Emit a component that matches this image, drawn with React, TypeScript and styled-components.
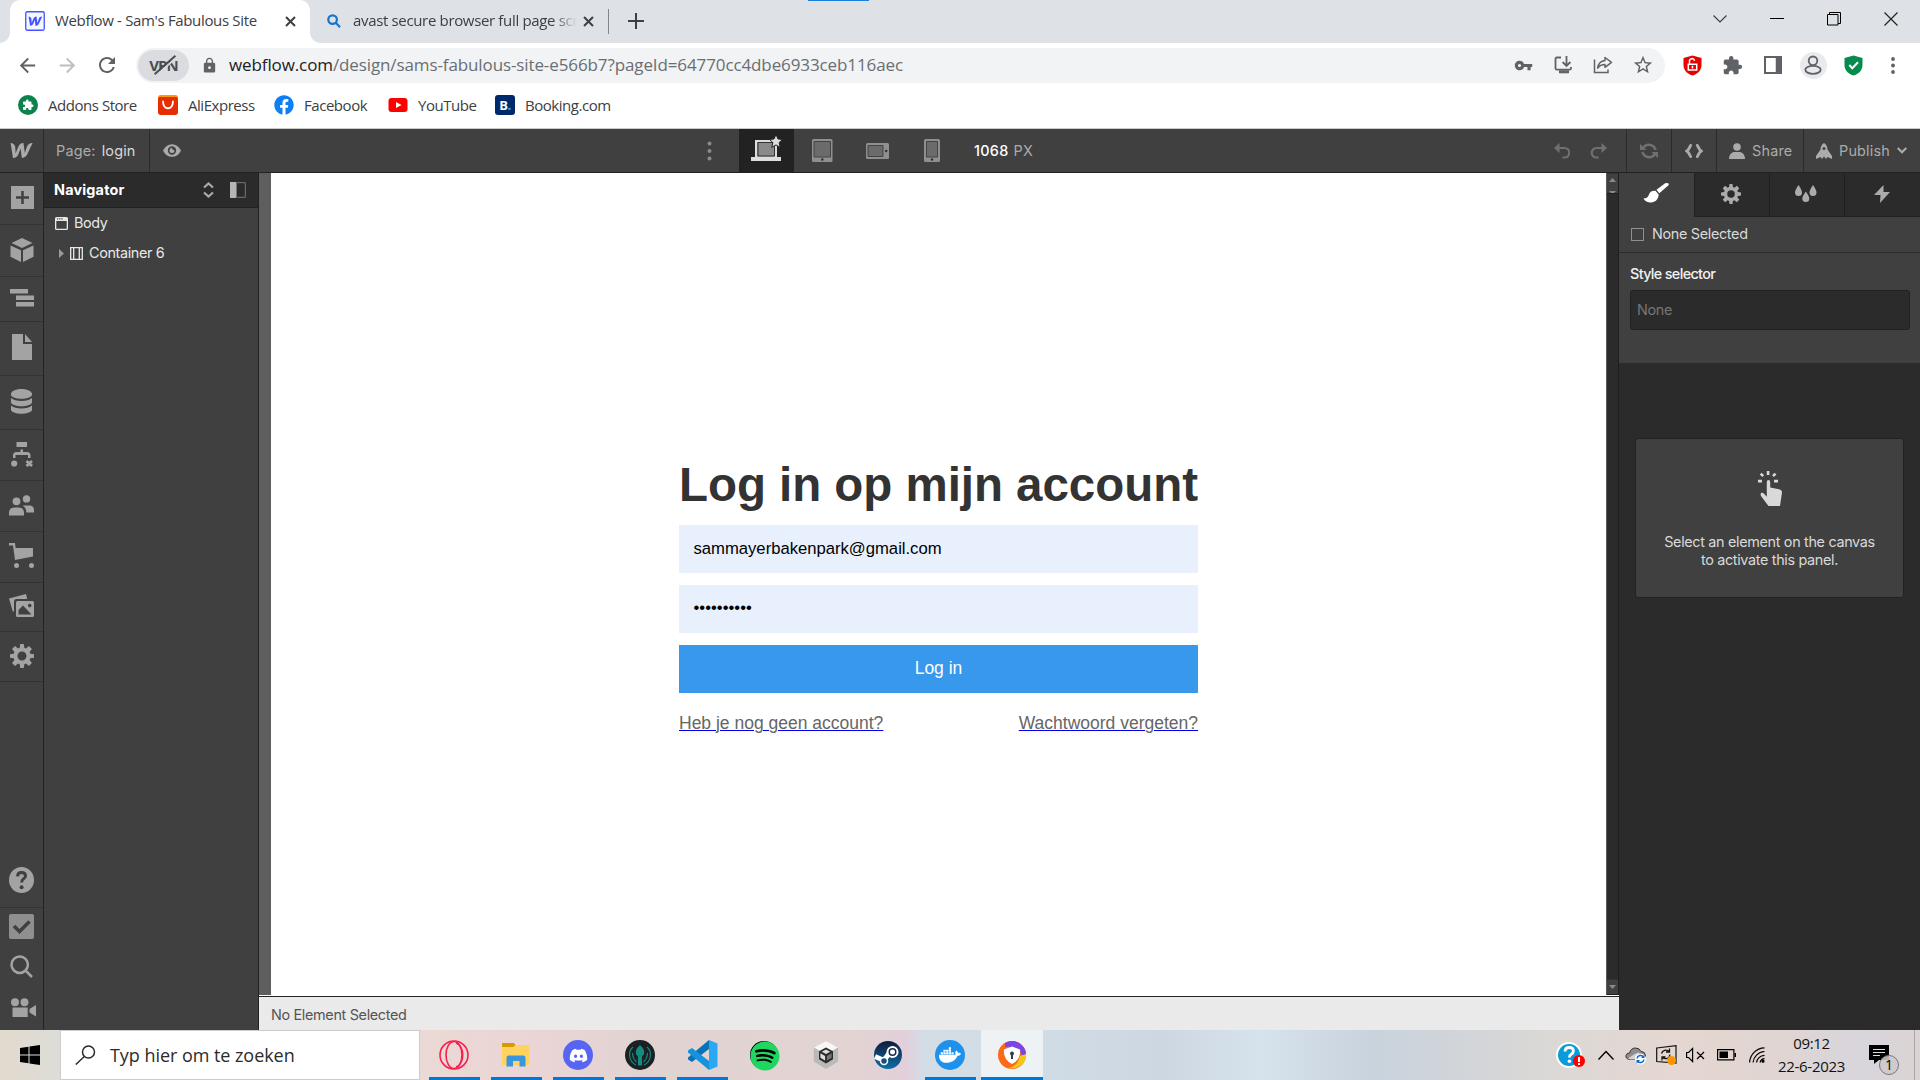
import React from 'react';
import styled, { createGlobalStyle, css } from 'styled-components';
import {
  MdArrowBack, MdArrowForward, MdRefresh, MdLock, MdVpnKey, MdStarBorder, MdExtension,
} from 'react-icons/md';
import { FaDiscord, FaSpotify, FaDocker, FaFacebook } from 'react-icons/fa';

const ui = `'Open Sans', 'Noto Sans', sans-serif`;
const app = `Inter, Roboto, sans-serif`;

const Global = createGlobalStyle`
  *, *::before, *::after { box-sizing: border-box; }
  body { margin: 0; overflow: hidden; }
  svg { display: block; flex: none; }
`;

const Screen = styled.div`
  width: 1920px;
  height: 1080px;
  display: flex;
  flex-direction: column;
  overflow: hidden;
  background: #fff;
`;

/* ---------- browser ---------- */
const TabStrip = styled.header`
  position: relative;
  height: 43px;
  flex: none;
  display: flex;
  background: #dee1e6;
  padding: 0 1px 0 10px;
  color: #3c4043;
  font-family: ${ui};
`;
const LoadMark = styled.i`
  position: absolute;
  left: 808px;
  top: 0;
  width: 61px;
  height: 1px;
  background: #1a7fdb;
`;
const Tab = styled.div<{ $active?: boolean }>`
  position: relative;
  display: flex;
  align-items: center;
  width: ${p => (p.$active ? 300 : 298)}px;
  padding: 0 14px 1px ${p => (p.$active ? 15 : 17)}px;
  ${p => p.$active && css`
    background: #fff;
    border-radius: 10px 10px 0 0;
    &::before, &::after {
      content: '';
      position: absolute;
      bottom: 0;
      width: 10px;
      height: 10px;
    }
    &::before { left: -10px; background: radial-gradient(circle at 0 0, #dee1e6 9.5px, #fff 10px); }
    &::after { right: -10px; background: radial-gradient(circle at 100% 0, #dee1e6 9.5px, #fff 10px); }
  `}
`;
const TabTitle = styled.span<{ $fade?: boolean }>`
  flex: 1;
  margin: 0 5px 2px ${p => (p.$fade ? 12 : 10)}px;
  font-size: 15px;
  line-height: 20px;
  letter-spacing: -0.34px;
  white-space: nowrap;
  ${p => p.$fade && css`mask-image: linear-gradient(90deg, #000 200px, transparent 224px);`}
`;
const Divider = styled.i`
  width: 1px;
  height: 25px;
  margin-top: 9px;
  background: #80868b;
`;
const Spacer = styled.div`flex: 1;`;
const Slot = styled.div<{ $w: number }>`
  width: ${p => p.$w}px;
  flex: none;
  display: flex;
  align-items: center;
  justify-content: center;
`;
const DimSlot = styled(Slot)`color: #bcbec1;`;
const PlusSlot = styled(Slot)`padding: 0 2px 1px 0;`;
const WinSlot = styled(Slot)`height: 37px;`;

const AddressRow = styled.div`
  height: 44px;
  flex: none;
  display: flex;
  align-items: center;
  color: #5f6368;
  padding: 0 0 0 7px;
`;
const AddressBar = styled.div`
  width: 1529px;
  height: 35px;
  margin-left: 9px;
  border-radius: 18px;
  background: #f1f3f4;
  display: flex;
  align-items: center;
  padding: 0 2px;
`;
const Vpn = styled.div`
  width: 51px;
  height: 31px;
  border-radius: 16px;
  background: #dadce0;
  display: grid;
  place-items: center;
`;
const VpnText = styled.span`
  position: relative;
  font: 700 15px/20px ${ui};
  letter-spacing: -1px;
  color: #4a4d51;
  &::after {
    content: '';
    position: absolute;
    left: 2px;
    top: 9px;
    width: 28px;
    height: 2px;
    background: #4a4d51;
    box-shadow: 0 2px 0 #dadce0;
    transform: rotate(-42deg);
  }
`;
const Url = styled.span`
  flex: 1;
  font: 17px/24px ${ui};
  letter-spacing: -0.11px;
  color: #6a6e73;
  white-space: nowrap;
  b { font-weight: 400; color: #202124; }
`;
const Avatar = styled.div`
  width: 27px;
  height: 27px;
  border-radius: 50%;
  background: #e8eaed;
  display: grid;
  place-items: center;
`;
const Bookmarks = styled.nav`
  height: 42px;
  flex: none;
  display: flex;
  align-items: center;
  padding: 0 0 5px 18px;
  border-bottom: 1px solid #c9cbce;
`;
const Bookmark = styled.a<{ $w: number }>`
  width: ${p => p.$w}px;
  flex: none;
  display: flex;
  align-items: center;
  gap: 10px;
  font: 15px/20px ${ui};
  letter-spacing: -0.46px;
  color: #3c4043;
`;
const Booking = styled.span`
  width: 20px;
  height: 20px;
  border-radius: 3px;
  background: #00296b;
  color: #fff;
  font: 700 13px/20px 'Open Sans', sans-serif;
  text-align: center;
  b { color: #2f9bea; }
`;

/* ---------- designer ---------- */
const TopBar = styled.div`
  height: 44px;
  flex: none;
  display: flex;
  background: #404040;
  border-bottom: 1px solid #222;
  color: #ababab;
  font: 14.4px/43px ${app};
  letter-spacing: 0.2px;
`;
const BarCell = styled.div<{ $w: number; $line?: boolean; $on?: boolean }>`
  width: ${p => p.$w}px;
  flex: none;
  display: flex;
  align-items: center;
  justify-content: center;
  background: ${p => (p.$on ? '#222' : 'transparent')};
  border-right: ${p => (p.$line ? '1px solid #2b2b2b' : 'none')};
  white-space: nowrap;
`;
const TextCell = styled(BarCell)<{ $gap: number }>`
  justify-content: flex-start;
  padding-left: 12px;
  gap: ${p => p.$gap}px;
`;
const PageName = styled.span`color: #d9d9d9;`;
const SizeValue = styled.span`
  font-weight: 500;
  color: #fff;
  letter-spacing: 0.3px;
`;
const RedoCell = styled(BarCell)`
  justify-content: flex-start;
  padding-left: 10px;
`;
const LaptopCell = styled(BarCell)`padding-bottom: 5px;`;
const Work = styled.div`
  height: 857px;
  flex: none;
  display: flex;
`;
const Rail = styled.aside`
  width: 44px;
  display: flex;
  flex-direction: column;
  background: #404040;
  border-right: 1px solid #222;
  color: #a3a3a3;
`;
const RailCell = styled.div<{ $h: number; $line?: boolean; $left?: number; $lift?: number }>`
  height: ${p => p.$h}px;
  flex: none;
  display: flex;
  align-items: center;
  justify-content: center;
  padding: 0 0 ${p => p.$lift ?? 2}px ${p => p.$left ?? 0}px;
  border-bottom: ${p => (p.$line ? '1px solid #333' : 'none')};
`;
const Navigator = styled.aside`
  width: 215px;
  background: #404040;
  border-right: 1px solid #222;
  color: #e8e8e8;
  font: 14.4px/30px ${app};
  letter-spacing: -0.36px;
`;
const NavHead = styled.div`
  height: 35px;
  display: flex;
  align-items: center;
  padding: 0 5px 0 10px;
  background: #2b2b2b;
  border-bottom: 1px solid #222;
  b { flex: 1; font-weight: 700; letter-spacing: 0.18px; color: #fff; }
`;
const NavRow = styled.div<{ $pad: number; $gap: number }>`
  height: 30px;
  display: flex;
  align-items: center;
  gap: ${p => p.$gap}px;
  padding-left: ${p => p.$pad}px;
  svg + svg { margin-right: 2px; }
`;
const Center = styled.main`
  width: 1360px;
  display: flex;
  flex-direction: column;
`;
const Stage = styled.div`
  height: 822px;
  flex: none;
  display: flex;
  background: #5e5e5e;
  padding-left: 12px;
`;
const Canvas = styled.section`
  width: 1335px;
  background: #fff;
  display: flex;
  justify-content: center;
  padding-top: 284px;
`;
const Scroll = styled.div`
  width: 13px;
  display: flex;
  flex-direction: column;
  justify-content: space-between;
  background: #2b2b2b;
  border-left: 1px solid #5a5a5a;
  border-right: 1px solid #1f1f1f;
`;
const ScrollEnd = styled.div<{ $h: number }>`
  height: ${p => p.$h}px;
  background: #404040;
  border-bottom: 1px solid #1f1f1f;
  border-top: 1px solid #333;
  display: flex;
  flex-direction: column;
  justify-content: space-between;
  align-items: center;
  padding: 4px 0 0;
`;
const Footer = styled.footer`
  flex: 1;
  background: #eaeaea;
  border-top: 1px solid #222;
  margin-top: 1px;
  padding-left: 12px;
  color: #555;
  font: 14.4px/35px ${app};
  letter-spacing: -0.33px;
`;
const Login = styled.section`
  width: 519px;
  font-family: 'Liberation Sans', Arial, sans-serif;
`;
const Title = styled.h1`
  margin: 0 0 13px;
  font-size: 47.5px;
  line-height: 55px;
  font-weight: 700;
  letter-spacing: -0.04px;
  color: #333;
  white-space: nowrap;
`;
const Field = styled.div<{ $dots?: boolean }>`
  height: 48px;
  margin-bottom: 12px;
  padding: 0 14.500px;
  background: #e8f0fe;
  color: #000;
  font-size: 16.67px;
  line-height: ${p => (p.$dots ? 45 : 47)}px;
  letter-spacing: ${p => (p.$dots ? '0' : '-0.01px')};
`;
const Button = styled.div`
  height: 48px;
  background: #3898ec;
  color: #fff;
  font-size: 17.5px;
  line-height: 46px;
  text-align: center;
`;
const Links = styled.div`
  display: flex;
  justify-content: space-between;
  margin-top: 18px;
`;
const TextLink = styled.a`
  font-size: 17.5px;
  line-height: 25px;
  color: #666;
  text-decoration: underline #00e;
  text-decoration-thickness: 1px;
`;

const StylePanel = styled.aside`
  width: 301px;
  display: flex;
  flex-direction: column;
  background: #2b2b2b;
  color: #d9d9d9;
  font: 14.4px/18px ${app};
  letter-spacing: -0.33px;
`;
const PanelTabs = styled.div`
  height: 44px;
  display: flex;
`;
const PanelTab = styled.div<{ $w: number; $on?: boolean }>`
  width: ${p => p.$w}px;
  display: grid;
  place-items: center;
  padding-bottom: ${p => (p.$on ? 4 : 2)}px;
  padding-right: 2px;
  color: ${p => (p.$on ? '#fff' : '#ababab')};
  background: ${p => (p.$on ? '#404040' : '#2b2b2b')};
  border-left: ${p => (p.$on ? 'none' : '1px solid #1f1f1f')};
  border-bottom: ${p => (p.$on ? 'none' : '1px solid #222')};
`;
const Selected = styled.div`
  height: 36px;
  display: flex;
  align-items: center;
  gap: 8px;
  padding: 0 0 1px 12px;
  background: #404040;
  border-bottom: 1px solid #2b2b2b;
`;
const Box = styled.i`
  width: 13px;
  height: 13px;
  border: 1.5px solid #8f8f8f;
`;
const Selector = styled.div`
  height: 110px;
  background: #404040;
  padding: 12px 10px 0 11px;
`;
const SelectorLabel = styled.div`
  height: 25px;
  font-weight: 500;
  letter-spacing: -0.66px;
  color: #f2f2f2;
`;
const SelectorInput = styled.div`
  height: 40px;
  border: 1px solid #212121;
  border-radius: 3px;
  background: #2b2b2b;
  padding-left: 6px;
  line-height: 38px;
  color: #757575;
`;
const Hint = styled.div`
  width: 269px;
  height: 160px;
  margin: 75px 0 0 16px;
  display: flex;
  flex-direction: column;
  align-items: center;
  text-align: center;
  padding-top: 32px;
  background: #404040;
  border: 1px solid #222;
  border-radius: 3px;
  p { margin: 27px 0 0; }
`;

/* ---------- taskbar ---------- */
const Taskbar = styled.footer`
  height: 50px;
  flex: none;
  display: flex;
  font-family: ${ui};
  background: linear-gradient(90deg, #e2dace 0, #dddcd8 60px, #ead9d5 430px, #ebd5d6 520px, #e2d3d3 640px, #e3d3d3 860px,
    #e2cfdb 905px, #d3dde6 925px, #d0dce5 1040px, #cdd7e1 1160px, #d6e2ec 1260px, #c9d3dd 1370px, #d3d5d8 1480px,
    #dad8d6 1540px, #e5d7d1 1670px, #e0d5d2 1780px, #d8d5dc 1860px, #dcd3d3 1920px);
`;
const SearchBox = styled.div`
  width: 360px;
  border: 1px solid #ccc;
  background: #fff;
  display: flex;
  align-items: center;
  padding-left: 14px;
  gap: 14px;
  font-size: 18px;
  letter-spacing: -0.05px;
  color: #2b2b2b;
`;
const Apps = styled.div`
  display: flex;
  padding-left: 3px;
`;
const AppSlot = styled.div<{ $open?: boolean; $active?: boolean }>`
  position: relative;
  width: 62px;
  display: grid;
  place-items: center;
  background: ${p => (p.$active ? 'rgba(255,255,255,.62)' : 'transparent')};
  &::after {
    content: '';
    display: ${p => (p.$open ? 'block' : 'none')};
    position: absolute;
    bottom: 0;
    left: ${p => (p.$active ? 0 : 6)}px;
    right: ${p => (p.$active ? 0 : 5)}px;
    height: 3px;
    background: #0078d7;
  }
`;
const Disc = styled.div<{ $bg: string; $fg: string; $s?: number }>`
  width: ${p => p.$s ?? 30}px;
  height: ${p => p.$s ?? 30}px;
  border-radius: 50%;
  display: grid;
  place-items: center;
  background: ${p => p.$bg};
  color: ${p => p.$fg};
`;
const Clock = styled.div`
  width: 91px;
  font-size: 15px;
  line-height: 23px;
  padding-top: 2px;
  letter-spacing: -0.3px;
  text-align: center;
  color: #111;
`;
const Notice = styled.div`
  position: relative;
  width: 57px;
  padding: 15px 0 0 12px;
`;
const Count = styled.span`
  position: absolute;
  left: 22px;
  top: 25px;
  width: 20px;
  height: 20px;
  border-radius: 50%;
  border: 1px solid #777;
  background: rgba(205, 202, 204, 0.88);
  font: 14px/18px ${ui};
  text-align: center;
`;
const Peek = styled.i`
  width: 6px;
  border-left: 1px solid #aaa6a6;
`;

type G = { w: number; h: number; vb?: string; children: React.ReactNode };
const Glyph = ({ w, h, vb, children }: G) => (
  <svg width={w} height={h} viewBox={vb ?? `0 0 ${w} ${h}`} fill="currentColor">{children}</svg>
);
const Line = ({ w, h, vb, sw = 2, children }: G & { sw?: number }) => (
  <svg width={w} height={h} viewBox={vb ?? `0 0 ${w} ${h}`} fill="none" stroke="currentColor" strokeWidth={sw}>{children}</svg>
);

const wPath = 'M16.8 5.1C16.8 5.1 15 10.8 14.9 11.2 14.8 10.7 13.5 1 13.5 1 10.5 1 8.9 3.1 8 5.4 8 5.4 5.8 11 5.6 11.5 5.6 11 5.3 5.4 5.3 5.4 5.1 2.7 2.6 1 .6 1L3 15.9C6.1 15.9 7.8 13.8 8.7 11.4 8.7 11.4 10.5 6.6 10.6 6.4 10.6 6.6 11.9 15.9 11.9 15.9 15 15.9 16.7 13.9 17.6 11.6L22.6 1C19.2 1 17.5 3.1 16.8 5.1Z';
const Cross = () => <Line w={11} h={11} sw={2}><path d="M1 1l9 9M10 1l-9 9" /></Line>;
const Gear = ({ s }: { s: number }) => (
  <Glyph w={s} h={s} vb="0 0 24 24">
    <path fillRule="evenodd" d="M10.2 0h3.600l.5 3.700 1.700.7L19 2.100l2.900 2.900-2.300 3 .7 1.700 3.700.5v3.600l-3.700.5-.7 1.700 2.300 3-2.900 2.900-3-2.300-1.700.7-.5 3.700h-3.600l-.5-3.700-1.700-.7-3 2.300-2.900-2.900 2.300-3-.7-1.700L0 13.800v-3.600l3.700-.5L4.400 8 2.100 5 5 2.100l3 2.300 1.700-.7zM12 7.500a4.500 4.500 0 100 9 4.500 4.500 0 000-9z" />
  </Glyph>
);

const Browser = () => (
  <>
    <TabStrip>
      <LoadMark />
      <Tab $active>
        <svg width="20" height="20" viewBox="0 0 20 20">
          <rect x=".75" y=".75" width="18.5" height="18.5" rx="1.5" fill="#f5f6ff" stroke="#4353ff" strokeWidth="1.3" />
          <path d={wPath} fill="#4353ff" transform="translate(3.2 5) scale(.62)" />
        </svg>
        <TabTitle>Webflow - Sam's Fabulous Site</TabTitle>
        <Cross />
      </Tab>
      <Tab>
        <svg width="14" height="14" viewBox="0 0 14 14" fill="none" stroke="#1a73c9" strokeWidth="2.2">
          <circle cx="5.6" cy="5.6" r="4.3" /><path d="M8.600 8.600l4.400 4.600" />
        </svg>
        <TabTitle $fade>avast secure browser full page scr</TabTitle>
        <Cross />
      </Tab>
      <Divider />
      <PlusSlot $w={55}><Line w={16} h={16} sw={2}><path d="M8 0v16M0 8h16" /></Line></PlusSlot>
      <Spacer />
      <WinSlot $w={57}><Line w={14} h={8} sw={1.2}><path d="M.5.500l6.500 6.500 6.500-6.500" /></Line></WinSlot>
      <WinSlot $w={57}><Line w={14} h={2} sw={1}><path d="M0 .500h14" stroke="#000" /></Line></WinSlot>
      <WinSlot $w={57}><Line w={14} h={14} sw={1}><path d="M.5 2.500h10.500v10.500H.5zM2.500 2.500V.500h11v11H11" stroke="#000" /></Line></WinSlot>
      <WinSlot $w={57}><Line w={14} h={14} sw={1.2}><path d="M.5.500l13 13M13.500.500l-13 13" stroke="#222" /></Line></WinSlot>
    </TabStrip>
    <AddressRow>
      <Slot $w={40}><MdArrowBack size={23} /></Slot>
      <DimSlot $w={40}><MdArrowForward size={23} /></DimSlot>
      <Slot $w={40}><MdRefresh size={24} /></Slot>
      <AddressBar>
        <Vpn><VpnText>VPN</VpnText></Vpn>
        <Slot $w={40}><MdLock size={17} /></Slot>
        <Url><b>webflow.com</b>/design/sams-fabulous-site-e566b7?pageId=64770cc4dbe6933ceb116aec</Url>
        <Slot $w={40}><MdVpnKey size={19} /></Slot>
        <Slot $w={40}>
          <Line w={19} h={18} sw={1.8}><path d="M7 1.500H3Q1.500 1.500 1.500 3v9.200q0 1.500 1.500 1.500h12.500q1.500 0 1.500-1.500V11" /><path d="M12.500 0v9.500M8.600 6l3.900 4 3.900-4" /><path d="M5 15.800h10" strokeWidth="3" /></Line>
        </Slot>
        <Slot $w={40}>
          <Line w={20} h={18} sw={1.5}><path d="M1.500 3.500v13h13.500v-3" /><path d="M12 1.500l6.500 4.800-6.500 5V8.500c-3.500 0-5.500 1-7.300 3.700C5.200 8 8 5 12 4.600z" strokeLinejoin="round" /></Line>
        </Slot>
        <Slot $w={40}><MdStarBorder size={22} /></Slot>
      </AddressBar>
      <Slot $w={7} />
      <Slot $w={40}>
        <svg width="19" height="21" viewBox="0 0 19 21"><path d="M9.500.500L18.500 3v7c0 6-5 9.500-9 10.500C5.500 19.500.500 16 .500 10V3z" fill="#e60000" /><path d="M6.500 9V6.500a2.500 2.500 0 015-.7M5.300 9.300h8.400v5.800H5.300zM9.500 10.800v2.800" fill="none" stroke="#fff" strokeWidth="1.5" /></svg>
      </Slot>
      <Slot $w={41}><MdExtension size={21} /></Slot>
      <Slot $w={40}><Line w={18} h={18} sw={2}><path d="M1 1h16v16H1z" /><path d="M14.500 1v16" strokeWidth="5.500" /></Line></Slot>
      <Slot $w={40}><Avatar><Line w={18} h={20} sw={1.8}><circle cx="9" cy="5.8" r="4.3" /><ellipse cx="9" cy="14.8" rx="7.700" ry="4" /></Line></Avatar></Slot>
      <Slot $w={41}>
        <svg width="19" height="21" viewBox="0 0 19 21"><path d="M9.500.500L18.500 3v7c0 6-5 9.500-9 10.500C5.500 19.500.500 16 .500 10V3z" fill="#078b4c" /><path d="M5.300 10l3 3.200 5.700-6" fill="none" stroke="#fff" strokeWidth="2" /></svg>
      </Slot>
      <Slot $w={38}><Glyph w={4} h={17}><circle cx="2" cy="2" r="1.900" /><circle cx="2" cy="8.500" r="1.900" /><circle cx="2" cy="15" r="1.900" /></Glyph></Slot>
    </AddressRow>
    <Bookmarks>
      <Bookmark $w={140}><Disc $bg="#0c824c" $fg="#fff" $s={20}><MdExtension size={12} /></Disc>Addons Store</Bookmark>
      <Bookmark $w={116}>
        <svg width="20" height="20" viewBox="0 0 20 20"><rect width="20" height="10" rx="2.5" fill="#ff9a00" /><path d="M0 3.500Q0 2 2 2h16q2 0 2 1.500V17q0 3-3 3H3q-3 0-3-3z" fill="#e62e04" /><path d="M5 6.500c.5 9 9.500 9 10 0" fill="none" stroke="#fff" strokeWidth="1.8" strokeLinecap="round" /></svg>
        AliExpress
      </Bookmark>
      <Bookmark $w={114}><FaFacebook size={20} color="#0f7ff3" />Facebook</Bookmark>
      <Bookmark $w={107}>
        <svg width="20" height="20" viewBox="0 0 20 20"><rect x=".5" y="3" width="19" height="14" rx="3" fill="#f00" /><path d="M8 7l5.500 3L8 13z" fill="#fff" /></svg>
        YouTube
      </Bookmark>
      <Bookmark $w={130}><Booking>B<b>.</b></Booking>Booking.com</Bookmark>
    </Bookmarks>
  </>
);

const Tools = () => (
  <TopBar>
    <BarCell $w={44} $line><Glyph w={23} h={17}><path d={wPath} /></Glyph></BarCell>
    <TextCell $w={106} $gap={6} $line><span>Page:</span><PageName>login</PageName></TextCell>
    <BarCell $w={44}>
      <Glyph w={18} h={13}><path fillRule="evenodd" d="M0 6.500C2 2.500 5 .200 9 .200s7 2.300 9 6.300c-2 4-5 6.300-9 6.300S2 10.500 0 6.500zM9 2.300a4.200 4.200 0 100 8.400 4.200 4.200 0 000-8.400zM9 4q.2 2.300 2.500 2.500A2.500 2.500 0 119 4z" /></Glyph>
    </BarCell>
    <Spacer />
    <BarCell $w={60}><Glyph w={5} h={20}><g fill="#8a8a8a"><circle cx="2.500" cy="2.500" r="2" /><circle cx="2.500" cy="10" r="2" /><circle cx="2.500" cy="17.500" r="2" /></g></Glyph></BarCell>
    <LaptopCell $w={55} $on>
      <svg width="32" height="28" viewBox="0 0 32 28"><path d="M5 7h20v16.500H5z" fill="#8a8a8a" stroke="#ddd" strokeWidth="2" /><path d="M7 8.500h16.500V22H7z" fill="none" stroke="#333" /><path d="M0 23h30v4H0z" fill="#ddd" /><path d="M25 .500l2 4.500 4.600.400-3.500 3.200 1.100 4.800-4.200-2.500-4.200 2.500 1.100-4.800L18.400 5.400 23 5z" fill="#ddd" stroke="#222" strokeWidth="1" /></svg>
    </LaptopCell>
    <BarCell $w={56}>
      <svg width="21" height="23" viewBox="0 0 21 23"><rect width="20.500" height="23" rx="1.500" fill="#8f8f8f" /><path d="M2 2.500h16.500v15.500H2z" fill="#6b6b6b" stroke="#444" /><circle cx="10.300" cy="20.500" r="1.200" fill="#333" /></svg>
    </BarCell>
    <BarCell $w={54}>
      <svg width="23" height="16" viewBox="0 0 23 16"><rect width="23" height="16" rx="1.500" fill="#8f8f8f" /><path d="M2 2.500h15v11H2z" fill="#6b6b6b" stroke="#444" /><circle cx="20.200" cy="8" r="1.200" fill="#333" /></svg>
    </BarCell>
    <BarCell $w={56}>
      <svg width="16" height="23" viewBox="0 0 16 23"><rect width="16" height="23" rx="1.500" fill="#8f8f8f" /><path d="M2.500 2.500h11v15.500h-11z" fill="#6b6b6b" stroke="#444" /><circle cx="8" cy="20.500" r="1.200" fill="#333" /></svg>
    </BarCell>
    <Slot $w={2} />
    <TextCell $w={100} $gap={5}><SizeValue>1068</SizeValue><span>PX</span></TextCell>
    <Slot $w={482} />
    <BarCell $w={36}><Line w={16} h={16} sw={2.2}><g stroke="#707070"><path d="M2 5h8.500a4.500 4.500 0 010 9.500H8.500" /><path d="M5.500 0L0 5l5.500 5z" fill="#707070" stroke="none" /></g></Line></BarCell>
    <RedoCell $w={47} $line><Line w={17} h={16} sw={2.2}><g stroke="#707070"><path d="M15 5H6.500a4.500 4.500 0 000 9.500H8.500" /><path d="M11.500 0L17 5l-5.500 5z" fill="#707070" stroke="none" /></g></Line></RedoCell>
    <BarCell $w={45} $line><Line w={18} h={16} sw={2.6}><g stroke="#707070"><path d="M3.500 4.500A6.800 6.800 0 0115.500 7M14.500 11.500A6.800 6.800 0 012.500 9" /><path d="M0 1v6h6.500zM18 15V9h-6.500z" fill="#707070" stroke="none" /></g></Line></BarCell>
    <BarCell $w={45} $line><Line w={18} h={14} sw={2.8}><path d="M6.800.700C4.600 1 5 5 1.800 7c3.200 2 2.800 6 5 6.300M11.200.700C13.400 1 13 5 16.200 7c-3.200 2-2.800 6-5 6.300" /></Line></BarCell>
    <TextCell $w={87} $gap={7} $line><Glyph w={16} h={16}><circle cx="8" cy="4" r="3.800" /><path d="M0 16c0-4.500 3-7 5.500-7h5C13 9 16 11.500 16 16z" /></Glyph>Share</TextCell>
    <TextCell $w={116} $gap={7}>
      <Glyph w={16} h={16}><path fillRule="evenodd" d="M8 0c2.500 1.500 3.500 4 3.500 6.500L16 13v3l-4.500-2L10 16l-2-2.500L6 16l-1.500-2L0 16v-3l4.500-6.500C4.500 4 5.500 1.500 8 0zM8 4a1.500 1.500 0 100 3 1.500 1.500 0 000-3z" /></Glyph>
      Publish
      <Line w={10} h={7} sw={2.2}><path d="M.7 1L5 5.300 9.300 1" /></Line>
    </TextCell>
  </TopBar>
);

const LeftRail = () => (
  <Rail>
    <RailCell $h={52} $line $left={1}><svg width="23" height="23" viewBox="0 0 23 23"><path d="M0 0h23v23H0z" fill="#a3a3a3" /><path d="M11.500 5v13M5 11.500h13" stroke="#404040" strokeWidth="2.5" /></svg></RailCell>
    <RailCell $h={52} $line><Glyph w={24} h={24}><path d="M12 0l10.500 5L12 10 1.500 5zM.5 7.500L11 12.300V24L.5 18.700zM23.500 7.500L13 12.300V24l10.500-5.300z" /></Glyph></RailCell>
    <RailCell $h={45} $line><Glyph w={24} h={18}><path d="M0 0h18v4.500H0zM6 6.500h18V11H6zM6 13h18v4.500H6z" /></Glyph></RailCell>
    <RailCell $h={54} $line $lift={3}><Glyph w={20} h={26}><path d="M0 0h11v10h9v16H0zM13 0l7 8h-7z" /></Glyph></RailCell>
    <RailCell $h={54} $line><Glyph w={21} h={25}><path d="M0 4.500C2-1.500 19-1.500 21 4.500V6c-2 5-19 5-21 0zM0 9c4 4 17 4 21 0v4.500c-2 5-19 5-21 0zM0 16.500c4 4 17 4 21 0V21c-2 5-19 5-21 0z" /></Glyph></RailCell>
    <RailCell $h={51} $line><Glyph w={22} h={25}><path d="M5.500 0H16v5H5.500zM2 16v-2.500Q2 10 5.500 10h4V7.500H12V10h4q3.500 0 3.500 3.500V16H17v-3H4.500v3z" /><circle cx="3.200" cy="21.500" r="3.100" /><path d="M15.500 19l5.500 5M21 19l-5.500 5" stroke="currentColor" strokeWidth="2.800" /></Glyph></RailCell>
    <RailCell $h={51} $line><Glyph w={25} h={21}><circle cx="7.500" cy="6.300" r="3.900" /><circle cx="17.500" cy="3.900" r="3.700" /><path d="M0 20.500V18c0-4 2.500-5.500 5.500-5.500h4c3 0 5.500 1.500 5.500 5.500v2.500zM13.500 10.500H20c3.500 0 5 2 5 4.500v2.500h-7.700c0-3-1-5.500-3.800-7z" /></Glyph></RailCell>
    <RailCell $h={51} $line $lift={3}><Glyph w={25} h={25}><path d="M0 0h6l.6 5H24v8.500L6 17 4 2.500H0z" /><circle cx="7.500" cy="22.500" r="2.500" /><circle cx="22.500" cy="22.500" r="2.500" /></Glyph></RailCell>
    <RailCell $h={49} $line $lift={3}><Glyph w={25} h={23}><path d="M0 4.500L17 0l1.200 5H7.500Q5 5 5 8v9.500H3.800z" /><path fillRule="evenodd" d="M8.500 7h15q1.500 0 1.500 1.500v13q0 1.500-1.500 1.500h-15Q7 23 7 21.500v-13Q7 7 8.500 7zM9.500 20.500H22.500L14 11.500 9.500 16zM20.700 9.800a1.800 1.800 0 100 3.600 1.800 1.800 0 000-3.600z" /></Glyph></RailCell>
    <RailCell $h={50} $line><Gear s={24} /></RailCell>
    <Spacer />
    <RailCell $h={54} $line $lift={1}><svg width="25" height="26" viewBox="0 0 25 26"><ellipse cx="12.500" cy="13" rx="12.500" ry="13" fill="#a3a3a3" /><path d="M8.500 9.300q.2-3.800 4-3.800 4 0 4 3.400 0 1.800-2.200 3.200-1.600 1-1.600 3.400" fill="none" stroke="#404040" strokeWidth="3" /><circle cx="12.600" cy="20.300" r="2" fill="#404040" /></svg></RailCell>
    <RailCell $h={38}><svg width="25" height="25" viewBox="0 0 25 25"><rect width="25" height="25" rx="2" fill="#8f8f8f" /><path d="M5 12l5.500 5.500L20.500 7.500" fill="none" stroke="#404040" strokeWidth="3.500" /></svg></RailCell>
    <RailCell $h={42} $lift={1}><Line w={23} h={23} sw={2.5}><circle cx="9.700" cy="9.700" r="8.200" /><path d="M15.500 15.500l6.500 6.500" /></Line></RailCell>
    <RailCell $h={42} $left={3} $lift={3}><Glyph w={25} h={19}><circle cx="4" cy="4.200" r="4" /><circle cx="13.500" cy="4.200" r="4" /><path d="M1.500 9.500h15.200V19H1.500zM25 7v11.500l-6.500-4v-3.500z" /></Glyph></RailCell>
  </Rail>
);

const App = () => (
  <Screen>
    <Global />
    <Browser />
    <Tools />
    <Work>
      <LeftRail />
      <Navigator>
        <NavHead>
          <b>Navigator</b>
          <Slot $w={30}><Line w={11} h={16} sw={2.2}><g stroke="#ababab"><path d="M1 5.500L5.500 1.500 10 5.500M1 10.500l4.500 4 4.500-4" /></g></Line></Slot>
          <Slot $w={30}><svg width="16" height="16" viewBox="0 0 16 16"><path d="M0 0h6v16H0z" fill="#b5b5b5" /><path d="M6.500.700h8.800v14.600H6.500z" fill="none" stroke="#777" /></svg></Slot>
        </NavHead>
        <NavRow $pad={11} $gap={6}>
          <Glyph w={13} h={13}><path fillRule="evenodd" d="M1.500 0h10Q13 0 13 1.500v10q0 1.500-1.500 1.500h-10Q0 13 0 11.500v-10Q0 0 1.500 0zM1.300 4v7.700h10.400V4zM2 1.200v1.200h1.200V1.200zm2.200 0v1.200h1.200V1.200zm2.200 0v1.200h1.200V1.200z" /></Glyph>
          Body
        </NavRow>
        <NavRow $pad={15} $gap={4}>
          <Glyph w={7} h={9}><path d="M0 0l5 4.500L0 9z" fill="#9a9a9a" /></Glyph>
          <Line w={13} h={13} sw={1.3}><path d="M.7.700h11.600v11.600H.7zM3.700.700v11.600M9.300.700v11.600" /></Line>
          Container 6
        </NavRow>
      </Navigator>
      <Center>
        <Stage>
          <Canvas>
            <Login>
              <Title>Log in op mijn account</Title>
              <Field>sammayerbakenpark@gmail.com</Field>
              <Field $dots>••••••••••</Field>
              <Button>Log in</Button>
              <Links>
                <TextLink>Heb je nog geen account?</TextLink>
                <TextLink>Wachtwoord vergeten?</TextLink>
              </Links>
            </Login>
          </Canvas>
          <Scroll>
            <ScrollEnd $h={21}>
              <Glyph w={7} h={4}><path d="M3.500 0L7 4H0z" fill="#8a8a8a" /></Glyph>
              <Glyph w={7} h={2}><path d="M0 0h7L5 2H2z" fill="#8a8a8a" /></Glyph>
            </ScrollEnd>
            <ScrollEnd $h={16}><Glyph w={7} h={5}><path d="M3.500 5L7 1H0z" fill="#8a8a8a" /></Glyph></ScrollEnd>
          </Scroll>
        </Stage>
        <Footer>No Element Selected</Footer>
      </Center>
      <StylePanel>
        <PanelTabs>
          <PanelTab $w={75} $on>
            <Glyph w={26} h={20}><path d="M25.500.200L22.500 0l-9 6.700 2.800 3.500L25.800 2zM12.500 7.800C9 7.500 6.500 9 5.800 12 5 14.500 3 15.500.500 15.500 2 18.500 6 20 9.500 19.200c4-.800 6-4 6.200-7.700z" /></Glyph>
          </PanelTab>
          <PanelTab $w={75}><Gear s={20} /></PanelTab>
          <PanelTab $w={75}><Glyph w={22} h={17}><path d="M3.500 0Q7 5 7 7.500a3.500 3.500 0 01-7 0Q0 5 3.500 0zM18 0q3.500 5 3.500 7.500a3.500 3.500 0 01-7 0Q14.500 5 18 0zM10.800 6.500q3.500 5 3.500 7a3.500 3.500 0 01-7 0q0-2 3.500-7z" /></Glyph></PanelTab>
          <PanelTab $w={76}><Glyph w={16} h={18}><path d="M9.500 0L0 10h6.500L6 18l10-11H9.500z" /></Glyph></PanelTab>
        </PanelTabs>
        <Selected><Box />None Selected</Selected>
        <Selector>
          <SelectorLabel>Style selector</SelectorLabel>
          <SelectorInput>None</SelectorInput>
        </Selector>
        <Hint>
          <Glyph w={24} h={35}>
            <g fill="#d9d9d9">
              <path d="M8.800 0h2.600v4H8.800zM0 8.800h4v2.600H0zM16 8.800h4v2.600h-4zM1.800 3.500l1.800-1.800 2.500 2.500L4.300 6zM18.400 3.500l-1.800-1.800-2.500 2.500L15.900 6z" />
              <path d="M8.800 11q0-2 1.700-2t1.700 2v5.500l8.800 1.800q3 .700 3 3.200l-2 13.500H10.500L3 25q-1-2.500.500-3.200 1.500-.500 2.500 1l2.800 3z" />
            </g>
          </Glyph>
          <p>Select an element on the canvas<br />to activate this panel.</p>
        </Hint>
      </StylePanel>
    </Work>
    <Taskbar>
      <Slot $w={60}><Glyph w={20} h={20}><path d="M0 3l8.500-1.200v7.700H0zM9.500 1.600L20 0v9.500H9.500zM0 10.500h8.500v7.700L0 17zM9.500 10.500H20V20L9.500 18.400z" /></Glyph></Slot>
      <SearchBox>
        <Line w={21} h={20} sw={1.5}><circle cx="13.500" cy="7" r="6" /><path d="M9.300 11.500L.8 19.500" /></Line>
        Typ hier om te zoeken
      </SearchBox>
      <Apps>
        <AppSlot $open><Line w={30} h={30} sw={1.6}><g stroke="#fa1e4e"><circle cx="15" cy="15" r="14" /><ellipse cx="15" cy="15" rx="8" ry="13.500" /><path d="M17 3c9 3 9 21 0 24" /></g></Line></AppSlot>
        <AppSlot $open><svg width="28" height="24" viewBox="0 0 28 24"><path d="M0 0h12l2 3v8H0z" fill="#d99a00" /><path d="M0 4h11l3-2h12q1.500 0 1.500 1.500V22H0z" fill="#ffd45e" /><path d="M4.500 23.500v-9q0-2 2-2h15q2 0 2 2v9h-6V18H11v5.500z" fill="#3a95dd" /></svg></AppSlot>
        <AppSlot $open><Disc $bg="#5865f2" $fg="#fff"><FaDiscord size={19} /></Disc></AppSlot>
        <AppSlot $open>
          <Disc $bg="#1b2023" $fg="#168c80">
            <Line w={24} h={26} sw={1.1}><path d="M12 4q4.500 4 3.500 8l-2 2v9h-3v-9l-2-2Q7.500 8 12 4z" fill="#168c80" /><path d="M8 23C0 19 0 9 5 5M16 23c8-4 8-14 3-18M8.500 20q-4-4-4-9M15.500 20q4-4 4-9" /></Line>
          </Disc>
        </AppSlot>
        <AppSlot $open><svg width="31" height="30" viewBox="0 0 31 30"><path d="M22 0v9L5 22 1 19.500v-2z" fill="#0a72b8" /><path d="M22 30v-9L5 8 1 10.500v2z" fill="#1593dc" /><path d="M22 0l8.500 3.500v23L22 30z" fill="#28a9f2" /></svg></AppSlot>
        <AppSlot><Disc $bg="#000" $fg="#1ed760" $s={28}><FaSpotify size={30} /></Disc></AppSlot>
        <AppSlot><svg width="26" height="28" viewBox="0 0 26 30"><path d="M13 0l13 7v15l-13 8L0 22V7z" fill="#b9b9b9" /><path d="M13 0l13 7-13 7L0 7z" fill="#f7f7f7" /><path d="M13 7l7.500 4v8.500L13 24l-7.500-4.500V11z" fill="#2c2c2c" /><path d="M13 9l4.500 2.500L13 14l-4.500-2.500zM7 13l5 3v5l-5-3z" fill="#ddd" /><path d="M19 13l-5 3v5l5-3z" fill="#777" /></svg></AppSlot>
        <AppSlot><Disc $bg="linear-gradient(#111a38, #0d6fa8)" $fg="#fff" $s={28}>
          <svg width="28" height="28" viewBox="0 0 28 28"><path d="M1 15.500l9 4 6-8.500" stroke="#fff" strokeWidth="5" fill="none" /><circle cx="18.500" cy="11" r="5" fill="#12294f" stroke="#fff" strokeWidth="2" /><circle cx="18.500" cy="11" r="2.500" fill="#fff" /><circle cx="10" cy="20" r="3.500" fill="#12507f" stroke="#fff" strokeWidth="1.5" /></svg>
        </Disc></AppSlot>
        <AppSlot $open><Disc $bg="#1d91ec" $fg="#fff"><FaDocker size={22} /></Disc></AppSlot>
        <AppSlot $open $active>
          <svg width="28" height="28" viewBox="0 0 28 28"><circle cx="14" cy="14" r="14" fill="#fb6a1b" /><path d="M7 2a14 14 0 0121 13q-3 2-5-3C21 7 13 5 7 6z" fill="#7a46e8" /><path d="M28 13c1 10-9 16-18 14 7-1 10-5 12-12z" fill="#f5c816" /><path d="M14 5.500l8 3q1 10-8 14.500Q5 18.500 6 8.500z" fill="#fff" /><circle cx="14" cy="12.500" r="2" fill="#333c4d" /><path d="M13 13h2v5h-2z" fill="#333c4d" /></svg>
        </AppSlot>
      </Apps>
      <Spacer />
      <Slot $w={30}>
        <svg width="30" height="28" viewBox="0 0 30 28"><circle cx="13" cy="14" r="13" fill="#fff" /><circle cx="13" cy="14" r="11" fill="#0a9bd8" /><path d="M9 10.500q.2-4 4.200-4 4.200 0 4.200 3.500 0 2-2.200 3.300-1.800 1-1.800 3.200" fill="none" stroke="#fff" strokeWidth="2.800" /><circle cx="13.400" cy="20.300" r="1.800" fill="#fff" /><circle cx="23" cy="20" r="6" fill="#f00" /><path d="M23 16v5M23 22v2" stroke="#fff" strokeWidth="2" /></svg>
      </Slot>
      <Slot $w={40}><Line w={16} h={10} sw={1.4}><path d="M.5 9.500L8 1.500l7.500 8" /></Line></Slot>
      <Slot $w={20}>
        <svg width="22" height="20" viewBox="0 0 22 20"><path d="M5 14.500Q.5 14 1 10.500 1.500 8 4.500 8 6 3 10.500 3q4 0 5.500 3.500 4 0 4.500 4 0 4-4 4z" fill="#8e8e8e" stroke="#333" /><path d="M3 13.500q8-6 11-6l2 7H5z" fill="#d5d5d5" /><circle cx="15.500" cy="14" r="5.500" fill="#fff" /><path d="M12 13.500a3.600 3.600 0 016.500-1.500M19 14.500a3.600 3.600 0 01-6.500 1.500" fill="none" stroke="#0a66c2" strokeWidth="1.500" /><path d="M19.500 9.500v3.500H16zM11.500 18.500V15H15z" fill="#0a66c2" /></svg>
      </Slot>
      <Slot $w={40}>
        <svg width="21" height="20" viewBox="0 0 21 20"><path d="M.7 3L20 .700V18L.7 16.500z" fill="none" stroke="#111" strokeWidth="1.200" /><path d="M5.500 8.500A4.500 4.500 0 0113 6.500M14 9.500a4.500 4.500 0 01-7.500 3M13.500 3.500v3.500H10M6 15.500V12h3.500" fill="none" stroke="#111" strokeWidth="1.300" /><circle cx="15.500" cy="15.500" r="4.500" fill="#ff9500" /></svg>
      </Slot>
      <Slot $w={19}><Line w={19} h={16} sw={1.2}><path d="M.6 5.500h2l4-4v13l-4-4h-2zM11 5l7 7M18 5l-7 7" /></Line></Slot>
      <Slot $w={43}><svg width="19" height="12" viewBox="0 0 19 12"><path d="M.6.600h16.300v10.300H.6z" fill="none" stroke="#000" strokeWidth="1.200" /><path d="M2.500 2.500H11v6.500H2.500zM17.500 4H19v4h-1.500z" /></svg></Slot>
      <Slot $w={18}><Line w={16} h={16} sw={1.2}><path d="M.6 15.500C1 8 7 1 15.500.800M4 15.500C4.500 10 9 4.800 15.500 4.500M7.500 15.500c.5-3.500 3.500-7 8-7.200M11 15.500c.5-2 2-3.700 4.500-3.800" /><circle cx="14" cy="14.200" r="1" fill="#000" /></Line></Slot>
      <Clock>09:12<br />22-6-2023</Clock>
      <Notice>
        <svg width="20" height="19" viewBox="0 0 20 19"><path d="M0 0h20v15H10l-5 4v-4H0z" /><path d="M4 4.500h12M4 7.500h12M4 10.500h7" stroke="#ddd" /></svg>
        <Count>1</Count>
      </Notice>
      <Peek />
    </Taskbar>
  </Screen>
);

export default App;
